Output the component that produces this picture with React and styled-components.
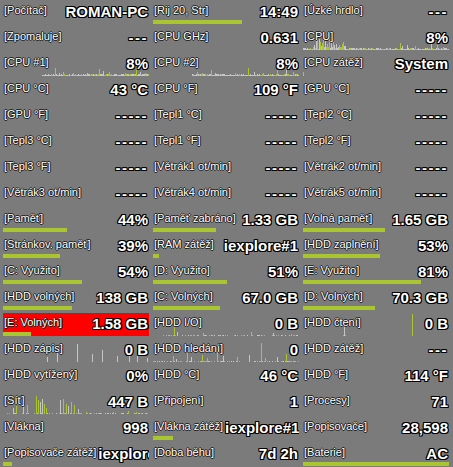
import React from 'react'
import styled, { createGlobalStyle } from 'styled-components'

const GREEN = '#a9c52f'
const GREY = '#c6c6c6'

const GlobalStyle = createGlobalStyle`
  html, body {
    margin: 0;
    padding: 0;
    background: #7b7b7b;
  }
  body {
    font-family: 'Liberation Sans', Arial, sans-serif;
  }
`

const Board = styled.div`
  width: 453px;
  height: 467px;
  box-sizing: border-box;
  padding: 1px 4px 0 3px;
  display: grid;
  grid-template-columns: repeat(3, 146px);
  grid-auto-rows: 23px;
  column-gap: 4px;
  row-gap: 3px;
  background: #7b7b7b;
  overflow: hidden;
`

const Cell = styled.div`
  position: relative;
  display: flex;
  flex-direction: column;
  overflow: hidden;
  background: ${({ $alert }) => ($alert ? '#ff0000' : 'transparent')};
`

const Head = styled.div`
  position: relative;
  z-index: 1;
  display: flex;
  align-items: flex-start;
  padding: 2px 1px 0 1px;
  white-space: nowrap;
`

const Label = styled.span`
  flex-shrink: 0;
  font-size: 11px;
  line-height: 14px;
  color: #fff;
  text-shadow: 1px 0 0 #1a1a1a, -1px 0 0 #1a1a1a, 0 1px 0 #1a1a1a, 0 -1px 0 #1a1a1a;
`

const Value = styled.span`
  flex-shrink: 0;
  margin-left: auto;
  padding-left: 2px;
  font-size: 15px;
  line-height: 17px;
  font-weight: bold;
  color: #fff;
  letter-spacing: ${({ $dash }) => ($dash ? '1.5px' : '0')};
  text-shadow: 1px 0 0 #000, -1px 0 0 #000, 0 1px 0 #000, 0 -1px 0 #000,
    1px 1px 0 #000, -1px -1px 0 #000, 1px -1px 0 #000, -1px 1px 0 #000;
`

const Bar = styled.div`
  position: relative;
  z-index: 1;
  margin-top: auto;
  height: 4px;
  background: ${GREEN};
`

const GraphSvg = styled.svg`
  position: absolute;
  left: 0;
  bottom: 0;
  z-index: 0;
`

function mulberry32(a) {
  return function () {
    a |= 0
    a = (a + 0x6d2b79f5) | 0
    let t = Math.imul(a ^ (a >>> 15), 1 | a)
    t = (t + Math.imul(t ^ (t >>> 7), 61 | t)) ^ t
    return ((t ^ (t >>> 14)) >>> 0) / 4294967296
  }
}

// low noise floor of a history graph
function floor(seed, from, to, max, greenRate) {
  const r = mulberry32(seed)
  const cols = []
  for (let x = from; x < to; x++) {
    const h = 1 + Math.floor(r() * max)
    cols.push([x, h, r() < greenRate ? GREEN : GREY])
  }
  return cols
}

function dashes(seed, from, to) {
  const r = mulberry32(seed)
  const cols = []
  for (let x = from; x < to; x++) {
    if (r() < 0.45) cols.push([x, 1, r() < 0.6 ? GREEN : GREY])
  }
  return cols
}

const spikes = (list) => list.map(([x, h, c]) => [x, h, c === 'g' ? GREEN : GREY])

const graphs = {
  cpu: [
    ...floor(11, 0, 146, 2, 0.35),
    ...floor(12, 10, 44, 7, 0.3),
    ...spikes([
      [13, 9, 'l'], [14, 14, 'g'], [16, 11, 'l'], [17, 8, 'g'], [20, 19, 'g'], [22, 10, 'l'],
      [24, 6, 'g'], [26, 13, 'g'], [28, 9, 'l'], [30, 11, 'g'], [33, 6, 'l'], [36, 5, 'g'],
      [40, 8, 'g'], [42, 4, 'l'], [97, 7, 'g'], [99, 4, 'l'], [104, 5, 'l'], [112, 4, 'g'],
      [128, 8, 'l'], [134, 5, 'g'], [140, 3, 'g'],
    ]),
  ],
  cpu1: [
    ...floor(21, 39, 146, 2, 0.3),
    ...spikes([
      [52, 8, 'g'], [56, 3, 'l'], [60, 4, 'g'], [70, 3, 'g'], [84, 3, 'l'], [96, 7, 'g'],
      [100, 5, 'l'], [106, 4, 'g'], [122, 3, 'g'], [133, 8, 'g'], [137, 4, 'l'], [142, 3, 'g'],
    ]),
  ],
  cpu2: [
    ...floor(31, 39, 146, 2, 0.3),
    ...spikes([
      [44, 4, 'g'], [49, 3, 'g'], [58, 6, 'g'], [62, 3, 'l'], [82, 3, 'g'], [95, 8, 'g'],
      [101, 4, 'l'], [110, 3, 'g'], [124, 6, 'g'], [133, 7, 'l'], [140, 4, 'g'],
    ]),
  ],
  tick: spikes([[0, 4, 'g']]),
  io: [
    ...dashes(41, 3, 146),
    ...spikes([[21, 13, 'g'], [24, 4, 'l'], [50, 3, 'g'], [98, 4, 'g'], [120, 3, 'l'], [138, 2, 'g']]),
  ],
  read: spikes([[40, 1, 'g'], [41, 11, 'l'], [42, 1, 'g'], [109, 22, 'g']]),
  write: spikes([
    [44, 5, 'l'], [54, 9, 'l'], [74, 18, 'l'], [89, 8, 'l'], [99, 12, 'l'],
    [114, 6, 'l'], [126, 11, 'l'], [134, 7, 'l'], [144, 4, 'l'],
  ]),
  seek: [
    ...dashes(51, 0, 146),
    ...spikes([
      [20, 6, 'g'], [23, 3, 'l'], [34, 9, 'g'], [38, 5, 'l'], [49, 7, 'g'], [54, 4, 'g'],
      [64, 18, 'g'], [70, 6, 'l'], [84, 5, 'g'], [96, 7, 'l'], [108, 19, 'g'], [112, 4, 'g'],
      [124, 5, 'l'], [133, 8, 'g'],
    ]),
  ],
  net: [
    ...dashes(61, 0, 146),
    ...spikes([
      [10, 6, 'l'], [13, 8, 'g'], [20, 10, 'l'], [24, 9, 'g'], [33, 18, 'g'], [35, 14, 'g'],
      [37, 12, 'l'], [39, 15, 'l'], [41, 10, 'g'], [43, 6, 'g'], [57, 14, 'l'], [60, 15, 'g'],
      [63, 10, 'g'], [65, 8, 'l'], [68, 12, 'g'], [71, 9, 'g'], [75, 5, 'l'], [83, 2, 'g'],
      [110, 2, 'g'], [125, 3, 'g'], [133, 2, 'g'],
    ]),
  ],
}

function Graph({ name }) {
  const cols = graphs[name]
  return (
    <GraphSvg width="146" height="23" viewBox="0 0 146 23">
      {cols.map(([x, h, c], i) => (
        <rect key={i} x={x} y={23 - h} width="1" height={h} fill={c} />
      ))}
    </GraphSvg>
  )
}

const cells = [
  ['Počítač', 'ROMAN-PC'], ['Rij 20, Str', '14:49', { bar: 61 }], ['Úzké hrdlo', '---'],
  ['Zpomaluje', '---'], ['CPU GHz', '0.631'], ['CPU', '8%', { graph: 'cpu' }],
  ['CPU #1', '8%', { graph: 'cpu1' }], ['CPU #2', '8%', { graph: 'cpu2' }], ['CPU zátěž', 'System', { graph: 'tick' }],
  ['CPU °C', '43 °C'], ['CPU °F', '109 °F'], ['GPU °C', '-----'],
  ['GPU °F', '-----'], ['Tepl1 °C', '-----'], ['Tepl2 °C', '-----'],
  ['Tepl3 °C', '-----'], ['Tepl1 °F', '-----'], ['Tepl2 °F', '-----'],
  ['Tepl3 °F', '-----'], ['Větrák1 ot/min', '-----'], ['Větrák2 ot/min', '-----'],
  ['Větrák3 ot/min', '-----'], ['Větrák4 ot/min', '-----'], ['Větrák5 ot/min', '-----'],
  ['Paměť', '44%', { bar: 44 }], ['Paměť zabráno', '1.33 GB', { bar: 43 }], ['Volná paměť', '1.65 GB', { bar: 56 }],
  ['Stránkov. paměť', '39%', { bar: 39 }], ['RAM zátěž', 'iexplore#1', { bar: 4 }], ['HDD zaplnění', '53%', { bar: 53 }],
  ['C: Využito', '54%', { bar: 54 }], ['D: Využito', '51%', { bar: 51 }], ['E: Využito', '81%', { bar: 81 }],
  ['HDD volných', '138 GB', { bar: 47 }], ['C: Volných', '67.0 GB', { bar: 46 }], ['D: Volných', '70.3 GB', { bar: 49 }],
  ['E: Volných', '1.58 GB', { bar: 19, alert: true }], ['HDD I/O', '0 B', { graph: 'io' }], ['HDD čtení', '0 B', { graph: 'read' }],
  ['HDD zápis', '0 B', { graph: 'write' }], ['HDD hledání', '0', { graph: 'seek' }], ['HDD zátěž', '---'],
  ['HDD vytížený', '0%'], ['HDD °C', '46 °C'], ['HDD °F', '114 °F'],
  ['Síť', '447 B', { graph: 'net' }], ['Připojení', '1'], ['Procesy', '71'],
  ['Vlákna', '998'], ['Vlákna zátěž', 'iexplore#1', { bar: 14 }], ['Popisovače', '28,598'],
  ['Popisovače zátěž', 'iexplore#1', { bar: 6 }], ['Doba běhu', '7d 2h'], ['Baterie', 'AC', { bar: 100 }],
]

function Meter({ label, value, bar, graph, alert }) {
  return (
    <Cell $alert={alert}>
      {graph && <Graph name={graph} />}
      <Head>
        <Label>[{label}]</Label>
        <Value $dash={/^-+$/.test(value)}>{value}</Value>
      </Head>
      {bar != null && <Bar style={{ width: `${bar}%` }} />}
    </Cell>
  )
}

export default function App() {
  return (
    <>
      <GlobalStyle />
      <Board>
        {cells.map(([label, value, opts = {}]) => (
          <Meter key={label} label={label} value={value} {...opts} />
        ))}
      </Board>
    </>
  )
}
